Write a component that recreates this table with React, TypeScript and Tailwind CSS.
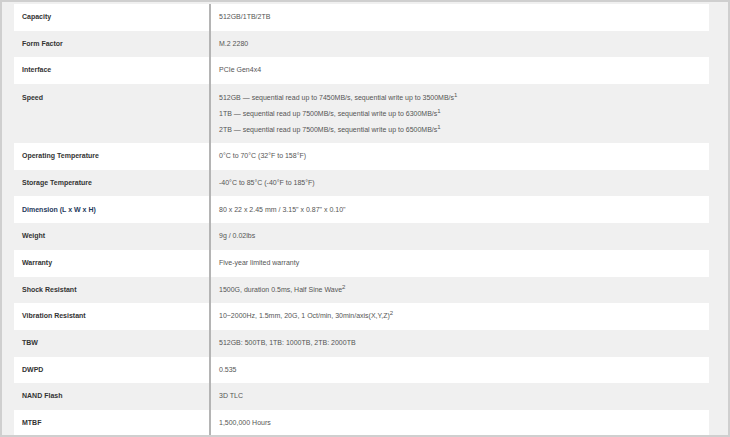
const SPECS: { label: string; value: React.ReactNode; accent?: boolean }[] = [
  { label: 'Capacity', value: '512GB/1TB/2TB' },
  { label: 'Form Factor', value: 'M.2 2280' },
  { label: 'Interface', value: 'PCIe Gen4x4' },
  {
    label: 'Speed',
    value: (
      <>
        <div>512GB — sequential read up to 7450MB/s, sequential write up to 3500MB/s<sup className="text-[6px]">1</sup></div>
        <div>1TB — sequential read up 7500MB/s, sequential write up to 6300MB/s<sup className="text-[6px]">1</sup></div>
        <div>2TB — sequential read up 7500MB/s, sequential write up to 6500MB/s<sup className="text-[6px]">1</sup></div>
      </>
    ),
  },
  { label: 'Operating Temperature', value: '0°C to 70°C (32°F to 158°F)' },
  { label: 'Storage Temperature', value: '-40°C to 85°C (-40°F to 185°F)' },
  { label: 'Dimension (L x W x H)', value: '80 x 22 x 2.45 mm / 3.15" x 0.87" x 0.10"', accent: true },
  { label: 'Weight', value: '9g / 0.02lbs' },
  { label: 'Warranty', value: 'Five-year limited warranty' },
  { label: 'Shock Resistant', value: <>1500G, duration 0.5ms, Half Sine Wave<sup className="text-[6px]">2</sup></> },
  { label: 'Vibration Resistant', value: <>10~2000Hz, 1.5mm, 20G, 1 Oct/min, 30min/axis(X,Y,Z)<sup className="text-[6px]">2</sup></> },
  { label: 'TBW', value: '512GB: 500TB, 1TB: 1000TB, 2TB: 2000TB' },
  { label: 'DWPD', value: '0.535' },
  { label: 'NAND Flash', value: '3D TLC' },
  { label: 'MTBF', value: '1,500,000 Hours' },
]

export default function App() {
  return (
    <div
      className="w-[730px] h-[437px] overflow-hidden bg-[#f0f0f0] border-2 border-[#cfcfcf] pl-[12px] pr-[18px] pt-[2px]"
      style={{ fontFamily: '"Liberation Sans", Arial, sans-serif' }}
    >
      <div className="w-[695px]">
        {SPECS.map((s, i) => {
          const multi = s.label === 'Speed'
          return (
            <div
              key={s.label}
              className={`flex ${i % 2 === 0 ? 'bg-white' : 'bg-[#f0f0f0]'}`}
            >
              <div
                className={`w-[195px] shrink-0 pl-[8px] text-[7px] font-bold ${
                  s.accent ? 'text-[#1f3a5c]' : 'text-[#333]'
                } ${multi ? 'pt-[5.5px] pb-[5.5px] leading-[16px]' : 'h-[26.7px] flex items-center'}`}
              >
                {s.label}
              </div>
              <div className="w-[2px] shrink-0 bg-[#b4b4b4]" />
              <div
                className={`flex-1 pl-[8px] text-[7px] text-[#555] ${
                  multi ? 'pt-[5.5px] pb-[5.5px] leading-[16px]' : 'h-[26.7px] flex items-center'
                }`}
              >
                <div>{s.value}</div>
              </div>
            </div>
          )
        })}
      </div>
    </div>
  )
}
